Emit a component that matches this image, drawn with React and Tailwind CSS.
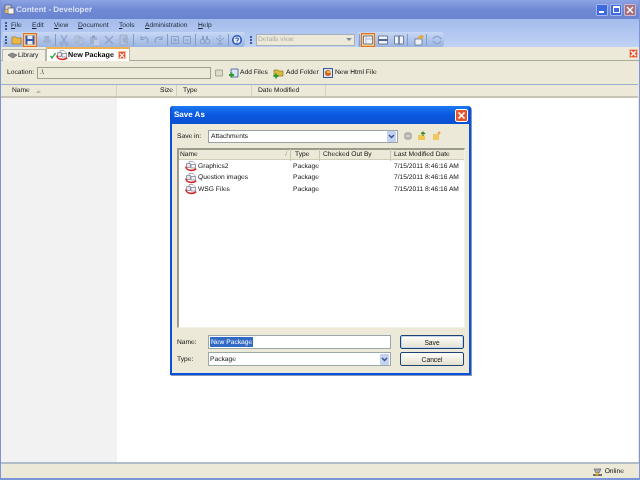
const Grip = () => (
  <div className="flex flex-col gap-[1px] w-[2px] mx-[2px]">
    <span className="w-[2px] h-[2px] bg-[#3a5a98]" />
    <span className="w-[2px] h-[2px] bg-[#3a5a98]" />
    <span className="w-[2px] h-[2px] bg-[#3a5a98]" />
  </div>
);

const Sep = ({ ml = 2, mr = 2 }) => (
  <span className="w-[1px] h-[12px] bg-[#7f9ccc]" style={{ marginLeft: ml, marginRight: mr }} />
);

const Ico = ({ w = 13, ml = 0, active, children }) => (
  <div
    className={`h-[14px] flex items-center justify-center shrink-0 ${active ? "border border-[#e0701c] bg-[#f8c888]" : ""}`}
    style={{ width: w, marginLeft: ml }}
  >
    <svg width="12" height="12" viewBox="0 0 12 12" fill="none">{children}</svg>
  </div>
);

const PackageIcon = () => (
  <svg width="12" height="11" viewBox="0 0 12 11" fill="none" className="shrink-0">
    <path d="M4 0.5h4l2 2v3H4z" fill="#fff" stroke="#8a8a9a" strokeWidth="0.7" />
    <path d="M1.5 2.5h4v4h-4z" fill="#e4e4ec" stroke="#77778a" strokeWidth="0.7" />
    <path d="M6 3.5h4.5v3.5H6z" fill="#f4f4f8" stroke="#77778a" strokeWidth="0.7" />
    <path d="M0.8 5.5C1.5 9.8 8 10.8 11.2 7.6" stroke="#d8201c" strokeWidth="1.5" />
  </svg>
);

const CloseBox = ({ size = 9 }) => (
  <span
    className="flex items-center justify-center bg-[#e6552c] border border-[#f4b8a0] shrink-0"
    style={{ width: size, height: size }}
  >
    <svg width="7" height="7" viewBox="0 0 7 7"><path d="M1 1l5 5M6 1l-5 5" stroke="#fff" strokeWidth="1.4" /></svg>
  </span>
);

const ComboArrow = () => (
  <span className="w-[9px] h-[11px] bg-[#c4d2f2] flex items-center justify-center rounded-[1px]">
    <svg width="7" height="5" viewBox="0 0 7 5"><path d="M1 1l2.5 2.5L6 1" stroke="#36508c" strokeWidth="1.4" fill="none" /></svg>
  </span>
);

const rows = ["Graphics2", "Question images", "WSG Files"];

const SaveAsDialog = () => (
  <div className="absolute left-[169px] top-[106px] w-[301px] h-[269px] rounded-t-[3px] bg-[#0a50d8] p-[2px] pt-0 flex flex-col shadow-[1px_1px_0_#8898b8]">
    <div className="h-[18px] flex items-center justify-between pl-[2px] pr-[1px] bg-gradient-to-b from-[#1c78f0] via-[#0a58e0] to-[#0a50d0] text-white font-bold text-[8px]">
      <span>Save As</span>
      <span className="w-[13px] h-[13px] rounded-[2px] bg-[#e2582c] border border-white flex items-center justify-center">
        <svg width="9" height="9" viewBox="0 0 9 9"><path d="M1.5 1.5l6 6M7.5 1.5l-6 6" stroke="#fff" strokeWidth="1.7" /></svg>
      </span>
    </div>
    <div className="flex-1 bg-[#ece9d8] px-[5px] flex flex-col">
      <div className="flex items-center h-[14px] mt-[5px]">
        <span className="w-[31px] pt-[1px]">Save in:</span>
        <div className="w-[190px] h-[13px] bg-white border border-[#9aa2a8] flex items-center justify-between pl-[2px] pr-[1px]">
          <span className="pt-[1px]">Attachments</span>
          <ComboArrow />
        </div>
        <svg width="10" height="10" viewBox="0 0 10 10" className="ml-[5px]"><circle cx="5" cy="5" r="4" fill="#b4b4ae" /><path d="M3 5h4" stroke="#e8e8e0" /></svg>
        <svg width="10" height="10" viewBox="0 0 10 10" className="ml-[4px]"><path d="M1 4h5l2 1v4H1z" fill="#eec850" /><path d="M6 5V1M4 3l2-2 2 2" stroke="#3c8c30" strokeWidth="1.2" fill="none" /></svg>
        <svg width="10" height="10" viewBox="0 0 10 10" className="ml-[5px]"><path d="M1 3h6v6H1z" fill="#f0c860" /><path d="M7 0.5v3M5.5 2h3" stroke="#e89020" /></svg>
      </div>
      <div className="mt-[5px] h-[180px] w-[288px] bg-white border-l-2 border-t-2 border-[#9c9a8c] border-r border-r-[#f4f2e8] border-b border-b-[#f4f2e8] flex flex-col">
        <div className="h-[10px] flex items-center bg-[#ece9d8] border-b border-[#d0cdb8] shrink-0 pt-[1px]">
          <span className="w-[111px] pl-[1px] flex justify-between pr-[3px]">
            <span>Name</span>
            <span className="text-[#999]">/</span>
          </span>
          <span className="w-[29px] pl-[4px] border-l border-[#c8c5b0]">Type</span>
          <span className="w-[71px] pl-[3px] border-l border-[#c8c5b0]">Checked Out By</span>
          <span className="w-[70px] pl-[3px] border-l border-[#c8c5b0]">Last Modified Date</span>
        </div>
        <div className="flex flex-col pt-[1px]">
          {rows.map((r) => (
            <div key={r} className="h-[11.5px] flex items-center">
              <span className="w-[114px] pl-[6px] flex items-center gap-[1px] shrink-0">
                <PackageIcon />
                <span>{r}</span>
              </span>
              <span className="w-[101px] shrink-0">Package</span>
              <span className="whitespace-nowrap">7/15/2011 8:46:16 AM</span>
            </div>
          ))}
        </div>
      </div>
      <div className="flex mt-[7px]">
        <div className="w-[31px] flex flex-col">
          <span className="h-[14px] flex items-center pt-[2px]">Name:</span>
          <span className="h-[14px] mt-[3px] flex items-center pt-[1px]">Type:</span>
        </div>
        <div className="w-[183px] flex flex-col">
          <div className="h-[14px] bg-white border border-[#9aa8a8] flex items-center pl-[1px]">
            <span className="bg-[#316ac5] text-white px-[1px] h-[10px] leading-[11px]">New Package</span>
          </div>
          <div className="h-[14px] mt-[3px] bg-white border border-[#9aa8a8] flex items-center justify-between pl-[1px] pr-[1px]">
            <span className="pt-[1px]">Package</span>
            <ComboArrow />
          </div>
        </div>
        <div className="w-[64px] ml-[9px] flex flex-col">
          <button className="h-[14px] pt-[1px] rounded-[2px] border border-[#1c4478] bg-gradient-to-b from-[#fffffa] to-[#e4e0d0] shadow-[inset_0_0_0_1px_#c4d4ee]">Save</button>
          <button className="h-[14px] pt-[1px] mt-[3px] rounded-[2px] border border-[#1c4478] bg-gradient-to-b from-[#fffffa] to-[#e4e0d0]">Cancel</button>
        </div>
      </div>
    </div>
  </div>
);

export default function App() {
  return (
    <div className="relative w-[640px] h-[480px] overflow-hidden flex flex-col bg-[#ece9d8] font-['Liberation_Sans',sans-serif] text-[6.7px] leading-[12px] [text-rendering:geometricPrecision] text-[#111] border-x border-b-2 border-[#7c94d8] blur-[0.3px]">
      {/* title bar */}
      <div className="h-[19px] shrink-0 flex items-center justify-between px-[3px] bg-gradient-to-b from-[#8ca4e4] via-[#7089d4] to-[#6a84d0]">
        <div className="flex items-center gap-[1px]">
          <svg width="11" height="11" viewBox="0 0 11 11">
            <rect x="1" y="1" width="6" height="5" fill="#d8d8d0" stroke="#50586c" strokeWidth="0.7" />
            <rect x="4" y="4" width="6" height="6" fill="#f4f4ec" stroke="#50586c" strokeWidth="0.7" />
            <rect x="1" y="6" width="3" height="3" fill="#e8b040" />
          </svg>
          <span className="font-bold text-[8px] text-[#d8e0f4]">Content - Developer</span>
        </div>
        <div className="flex items-center">
          <span className="w-[12px] h-[12px] rounded-[1px] bg-[#3c68e0] border border-[#a4b8ee] flex items-end pl-[2px] pb-[2px]">
            <span className="w-[5px] h-[2px] bg-white" />
          </span>
          <span className="w-[12px] h-[12px] ml-[2px] rounded-[1px] bg-[#3c68e0] border border-[#a4b8ee] flex items-center justify-center">
            <span className="w-[7px] h-[7px] border border-white border-t-2" />
          </span>
          <span className="w-[12px] h-[12px] ml-[2px] rounded-[1px] bg-[#a8707c] border border-[#c8b8d8] flex items-center justify-center">
            <svg width="8" height="8" viewBox="0 0 8 8"><path d="M1 1l6 6M7 1L1 7" stroke="#fff" strokeWidth="1.4" /></svg>
          </span>
        </div>
      </div>

      {/* menu + toolbar */}
      <div className="h-[28px] shrink-0 bg-gradient-to-b from-[#a4bcec] to-[#c0d2f4] flex flex-col">
        <div className="h-[13px] flex items-center pl-[2px]">
          <Grip />
          <div className="flex items-center text-[#1c2434] ml-[2px] pt-[1px]">
            <span className="w-[21px]"><u>F</u>ile</span>
            <span className="w-[22px]"><u>E</u>dit</span>
            <span className="w-[24px]"><u>V</u>iew</span>
            <span className="w-[41px]"><u>D</u>ocument</span>
            <span className="w-[26px]"><u>T</u>ools</span>
            <span className="w-[53px]"><u>A</u>dministration</span>
            <span><u>H</u>elp</span>
          </div>
        </div>
        <div className="h-[15px] flex items-center pl-[2px]">
          <div className="h-[15px] w-[242px] flex items-center rounded-r-[3px] bg-gradient-to-b from-[#c8d8f6] to-[#9cb4e0]">
            <Grip />
            <Ico ml={1}><path d="M1 3h4l1 1h4v6H1z" fill="#eab848" stroke="#a0781c" strokeWidth="0.7" /></Ico>
            <Ico w={14} active><path d="M1.5 1.5h9v9h-9z" fill="#3a58b0" /><path d="M3.5 1.5h5v3.5h-5z" fill="#e8ecf4" /><path d="M3.5 7h5v3.5h-5z" fill="#f0f0f0" /></Ico>
            <Ico ml={3}><path d="M2 6h8v3H2zM3.5 2h5v4h-5z" fill="#a0b2d2" /></Ico>
            <Sep mr={1} />
            <Ico><path d="M3 1l4 7M9 1L5 8" stroke="#8c9ec4" strokeWidth="1.2" /><circle cx="3.5" cy="9.5" r="1.5" stroke="#8c9ec4" /><circle cx="8.5" cy="9.5" r="1.5" stroke="#8c9ec4" /></Ico>
            <Ico ml={2}><path d="M2 2h5v6H2zM5 4h5v6H5z" fill="#b8c6e2" stroke="#94a6c8" strokeWidth="0.6" /></Ico>
            <Ico ml={2}><path d="M2 3h7v7H2z" fill="#a0b2d2" /><path d="M4 1.5h3V4H4z" fill="#8c9ec4" /><path d="M6 6h5v5H6z" fill="#c0cce4" /></Ico>
            <Ico ml={2}><path d="M2 2l8 8M10 2l-8 8" stroke="#94a4c6" strokeWidth="1.5" /></Ico>
            <Ico ml={2}><path d="M2 1h7v10H2z" fill="#b4c2dc" stroke="#8c9ec4" strokeWidth="0.6" /><circle cx="7.5" cy="6" r="3" fill="#a0b2d2" /></Ico>
            <Sep ml={3} />
            <Ico ml={1}><path d="M3 5c2-3 7-2 7 2 0 1-1 2-1 2M3 2v3.5h3.5" stroke="#8ca0c8" strokeWidth="1.1" /></Ico>
            <Ico ml={2}><path d="M9 5C7 2 2 3 2 7c0 1 1 2 1 2M9 2v3.5H5.5" stroke="#8ca0c8" strokeWidth="1.1" /></Ico>
            <Sep mr={1} />
            <Ico w={12}><path d="M2.5 2.5h7v7h-7zM4 6h4M6 4v4" stroke="#8ca0c8" /></Ico>
            <Ico w={12}><path d="M2.5 2.5h7v7h-7zM4 6h4" stroke="#8ca0c8" /></Ico>
            <Sep />
            <Ico><circle cx="3.5" cy="7.5" r="2.3" stroke="#8c9ec4" /><circle cx="8.5" cy="7.5" r="2.3" stroke="#8c9ec4" /><path d="M3 2h2v4H3zM7 2h2v4H7z" fill="#8c9ec4" /></Ico>
            <Ico ml={2}><path d="M6 1v4M2 4l4 3 4-3M3 10h6M6 7v3" stroke="#8c9ec4" /></Ico>
            <Sep mr={1} />
            <Ico><circle cx="6" cy="6" r="5" fill="#2a58b8" /><circle cx="6" cy="6" r="3.4" fill="#e4ecf8" /><path d="M4.6 4.8C5 3.6 7.6 3.8 7.4 5.3 7.3 6.1 6 6.2 6 7.4M6 8.4v1" stroke="#2a58b8" strokeWidth="1.1" /></Ico>
          </div>
          <div className="ml-[3px] h-[15px] flex items-center">
            <Grip />
            <div className="ml-[2px] w-[99px] h-[12px] border border-[#a4aebc] bg-[#ece9d8] flex items-center justify-between pl-[1px] pr-[2px] text-[#a8a8a0]">
              <span>Details view</span>
              <svg width="6" height="4" viewBox="0 0 6 4"><path d="M0 0h6L3 3z" fill="#8088a0" /></svg>
            </div>
          </div>
          <div className="ml-[3px] h-[15px] w-[86px] flex items-center rounded-r-[3px] bg-gradient-to-b from-[#c8d8f6] to-[#9cb4e0]">
            <Sep ml={1} mr={1} />
            <Ico w={14} active><path d="M1.5 2h9v8h-9z" fill="#f0f4fa" stroke="#50688c" strokeWidth="0.8" /><path d="M4 2v8M4 5h6" stroke="#8ca0c0" strokeWidth="0.7" /></Ico>
            <Ico ml={1}><path d="M1.5 2h9v8h-9z" fill="#f0f4fa" stroke="#50688c" strokeWidth="0.8" /><path d="M1.5 5h9v2h-9z" fill="#50688c" /></Ico>
            <Ico ml={3}><path d="M1.5 2h9v8h-9z" fill="#f0f4fa" stroke="#50688c" strokeWidth="0.8" /><path d="M6 2v8" stroke="#50688c" strokeWidth="1.4" /></Ico>
            <Sep />
            <Ico ml={2}><path d="M2 5h7v6H2z" fill="#eef0f4" stroke="#50688c" strokeWidth="0.7" /><path d="M4 4l4-3 3 1-2 3z" fill="#e4a82c" /></Ico>
            <Sep ml={1} />
            <Ico ml={1}><path d="M2 5c2-4 7-3 8 0M10 7c-2 4-7 3-8 0" stroke="#8ca4c8" strokeWidth="1.3" /></Ico>
          </div>
        </div>
      </div>

      {/* tab strip */}
      <div className="h-[14px] shrink-0 flex items-end pl-[1px] border-b border-[#a8a89c] relative">
        <div className="h-[12px] w-[44px] flex items-center pl-[4px] border border-b-0 border-[#b8b8a8] bg-[#f0eee2] mb-[-1px]">
          <svg width="11" height="7" viewBox="0 0 11 7"><path d="M1 3l4-2 5 2-4 3z" fill="#8c8c8c" stroke="#505050" strokeWidth="0.6" /></svg>
          <span>Library</span>
        </div>
        <div className="h-[14px] w-[84px] flex items-center pl-[3px] bg-white border-t-2 border-t-[#f0b050] border-x border-x-[#b8b8a8] mb-[-1px]">
          <svg width="6" height="7" viewBox="0 0 6 7"><path d="M0.5 4l1.5 2L5.5 1" stroke="#2c9c30" strokeWidth="1.3" fill="none" /></svg>
          <PackageIcon />
          <span className="font-bold text-[7.2px] text-black whitespace-nowrap">New Package</span>
          <span className="ml-[4px]"><CloseBox size={8} /></span>
        </div>
        <span className="absolute right-[1px] top-[2px]"><CloseBox size={9} /></span>
      </div>

      {/* location row */}
      <div className="h-[23px] shrink-0 flex items-center pl-[6px] pt-[1px]">
        <span className="w-[30px]">Location:</span>
        <div className="w-[174px] h-[12px] border border-[#a0a090] bg-[#ece9d8] flex items-center pl-[2px]">.\</div>
        <svg width="9" height="8" viewBox="0 0 9 8" className="ml-[4px]"><path d="M0.5 1h7v6h-7z" fill="#dcdacb" stroke="#a8a698" /></svg>
        <svg width="10" height="11" viewBox="0 0 10 11" className="ml-[5px]"><path d="M2 1h7v8H2z" fill="#dce4f4" stroke="#385898" strokeWidth="0.8" /><path d="M0 7h5M2.5 4.5v5" stroke="#2c9c30" strokeWidth="1.8" /></svg>
        <span className="ml-[1px] w-[29px]">Add Files</span>
        <svg width="11" height="11" viewBox="0 0 11 11" className="ml-[4px]"><path d="M1 2h4l1 1h4v5H1z" fill="#d8bc40" stroke="#8c7820" strokeWidth="0.7" /><path d="M0.5 8h5M3 5.5v5" stroke="#2c9c30" strokeWidth="1.8" /></svg>
        <span className="ml-[2px] w-[36px]">Add Folder</span>
        <svg width="10" height="10" viewBox="0 0 10 10" className="ml-[1px]"><rect x="0.5" y="0.5" width="9" height="9" fill="#dce4f4" stroke="#385898" /><circle cx="5" cy="5" r="3" fill="#d86020" /><path d="M4 3h4v2H4z" fill="#eec040" /></svg>
        <span className="ml-[2px]">New Html File</span>
      </div>

      {/* grid */}
      <div className="flex-1 flex flex-col mr-[1px] border-t border-[#9ab0c8]">
        <div className="h-[13px] shrink-0 flex items-center border-b-2 border-[#c8c5b4] bg-[#ece9d8]">
          <span className="w-[116px] pl-[11px] pt-[1px] flex items-center gap-[6px] border-r border-[#d4d1c0] h-full">
            Name
            <svg width="5" height="3" viewBox="0 0 5 3"><path d="M2.5 0L5 3H0z" fill="#bcb9a8" /></svg>
          </span>
          <span className="w-[60px] pr-[3px] pt-[1px] border-r border-[#d4d1c0] h-full flex items-center justify-end">Size</span>
          <span className="w-[75px] pl-[6px] pt-[1px] border-r border-[#d4d1c0] h-full flex items-center">Type</span>
          <span className="w-[74px] pl-[6px] pt-[1px] border-r border-[#d4d1c0] h-full flex items-center">Date Modified</span>
        </div>
        <div className="flex-1 flex">
          <div className="w-[116px] bg-[#f2f2f2]" />
          <div className="flex-1 bg-white" />
        </div>
      </div>

      {/* status bar */}
      <div className="h-[16px] shrink-0 border-t-2 border-[#b0bcc8] flex items-center justify-end pr-[15px] gap-[2px] pt-[2px]">
        <svg width="11" height="10" viewBox="0 0 11 10"><path d="M2 2h7l-2 4H4z" fill="#a8acb0" stroke="#505458" strokeWidth="0.6" /><path d="M1 8h9" stroke="#38383c" strokeWidth="1.4" /><circle cx="5" cy="7" r="1.5" fill="#e8b020" /></svg>
        <span>Online</span>
      </div>

      <SaveAsDialog />
    </div>
  );
}
